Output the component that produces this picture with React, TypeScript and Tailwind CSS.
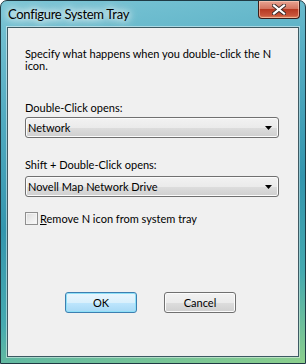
import React from "react";

const font = "font-['Segoe_UI','Lato',sans-serif]";

function Combo({ value }: { value: string }) {
  return (
    <div className="flex h-[21px] w-[254px] items-center justify-between rounded-[3px] border border-[#707070] bg-[linear-gradient(#f2f2f2_0%,#ebebeb_50%,#dddddd_51%,#cfcfcf_100%)] pl-[2px] pr-[6px] shadow-[inset_0_0_0_1px_#fbfbfb]">
      <span className="text-[11px] leading-[12px] text-black">{value}</span>
      <svg width="7" height="4" viewBox="0 0 7 4">
        <path d="M0 0h7L3.5 4z" fill="#000" />
      </svg>
    </div>
  );
}

function Button({ label, primary }: { label: string; primary?: boolean }) {
  return (
    <button
      type="button"
      className={`flex h-[21px] w-[72px] items-center justify-center rounded-[3px] border text-[11px] leading-[12px] text-black ${
        primary
          ? "border-[#3c7fb1] bg-[linear-gradient(#eaf6fd_0%,#d9f0fc_50%,#bee6fd_51%,#a7d9f5_100%)] shadow-[inset_0_0_0_1px_#8fe0f7]"
          : "border-[#707070] bg-[linear-gradient(#f2f2f2_0%,#ebebeb_50%,#dddddd_51%,#cfcfcf_100%)] shadow-[inset_0_0_0_1px_#fbfbfb]"
      }`}
    >
      {label}
    </button>
  );
}

export default function App() {
  return (
    <div
      className={`${font} relative flex h-[364px] w-[306px] flex-col overflow-hidden rounded-t-[7px] border border-[#1f3a44] bg-[linear-gradient(170deg,#7cc6d6_0%,#52abc1_28%,#3496ae_55%,#45aab0_78%,#8ccf8c_100%)]`}
    >
      <div className="flex h-[26px] shrink-0 items-start justify-between">
        <span className="ml-[7px] mt-[6px] text-[13px] leading-[14px] tracking-[-0.3px] text-black [text-shadow:0_0_6px_#fff,0_0_10px_#fff,0_0_14px_#fff]">
          Configure System Tray
        </span>
        <div className="mr-[5px] flex h-[18px] w-[42px] items-center justify-center rounded-b-[4px] border border-t-0 border-[#3b1e1a] bg-[linear-gradient(#e8a493_0%,#d47560_45%,#b73a22_50%,#c8553a_85%,#e08a5e_100%)] shadow-[inset_0_0_0_1px_rgba(255,210,190,0.6)]">
          <svg width="14" height="11" viewBox="0 0 14 11">
            <path
              d="M2 1.5L12 9.5M12 1.5L2 9.5"
              stroke="#3a2a28"
              strokeWidth="4"
              strokeLinecap="square"
            />
            <path
              d="M2 1.5L12 9.5M12 1.5L2 9.5"
              stroke="#fff"
              strokeWidth="2.2"
              strokeLinecap="square"
            />
          </svg>
        </div>
      </div>
      <div className="mx-[6px] mb-[6px] flex flex-1 flex-col border border-[#3d5a63] bg-[#f0f0f0] pl-[17px] pt-[20px] shadow-[0_0_0_1px_rgba(255,255,255,0.45)]">
        <p className="w-[262px] text-[11px] leading-[12px] text-black">
          Specify what happens when you double-click the N icon.
        </p>
        <p className="mt-[30px] text-[11px] leading-[12px] text-black">Double-Click opens:</p>
        <div className="mt-[3px]">
          <Combo value="Network" />
        </div>
        <p className="mt-[21px] text-[11px] leading-[12px] text-black">Shift + Double-Click opens:</p>
        <div className="mt-[5px]">
          <Combo value="Novell Map Network Drive" />
        </div>
        <label className="mt-[15px] flex items-center gap-[2px] text-[11px] leading-[13px] text-black">
          <span className="h-[13px] w-[13px] border border-[#8f8f8f] bg-[linear-gradient(135deg,#dcdcdc,#fbfbfb)] shadow-[inset_0_0_0_1px_#f4f4f4]" />
          <span>
            <span className="underline">R</span>emove N icon from system tray
          </span>
        </label>
        <div className="mt-[67px] flex gap-[27px] pl-[40px]">
          <Button label="OK" primary />
          <Button label="Cancel" />
        </div>
      </div>
    </div>
  );
}
